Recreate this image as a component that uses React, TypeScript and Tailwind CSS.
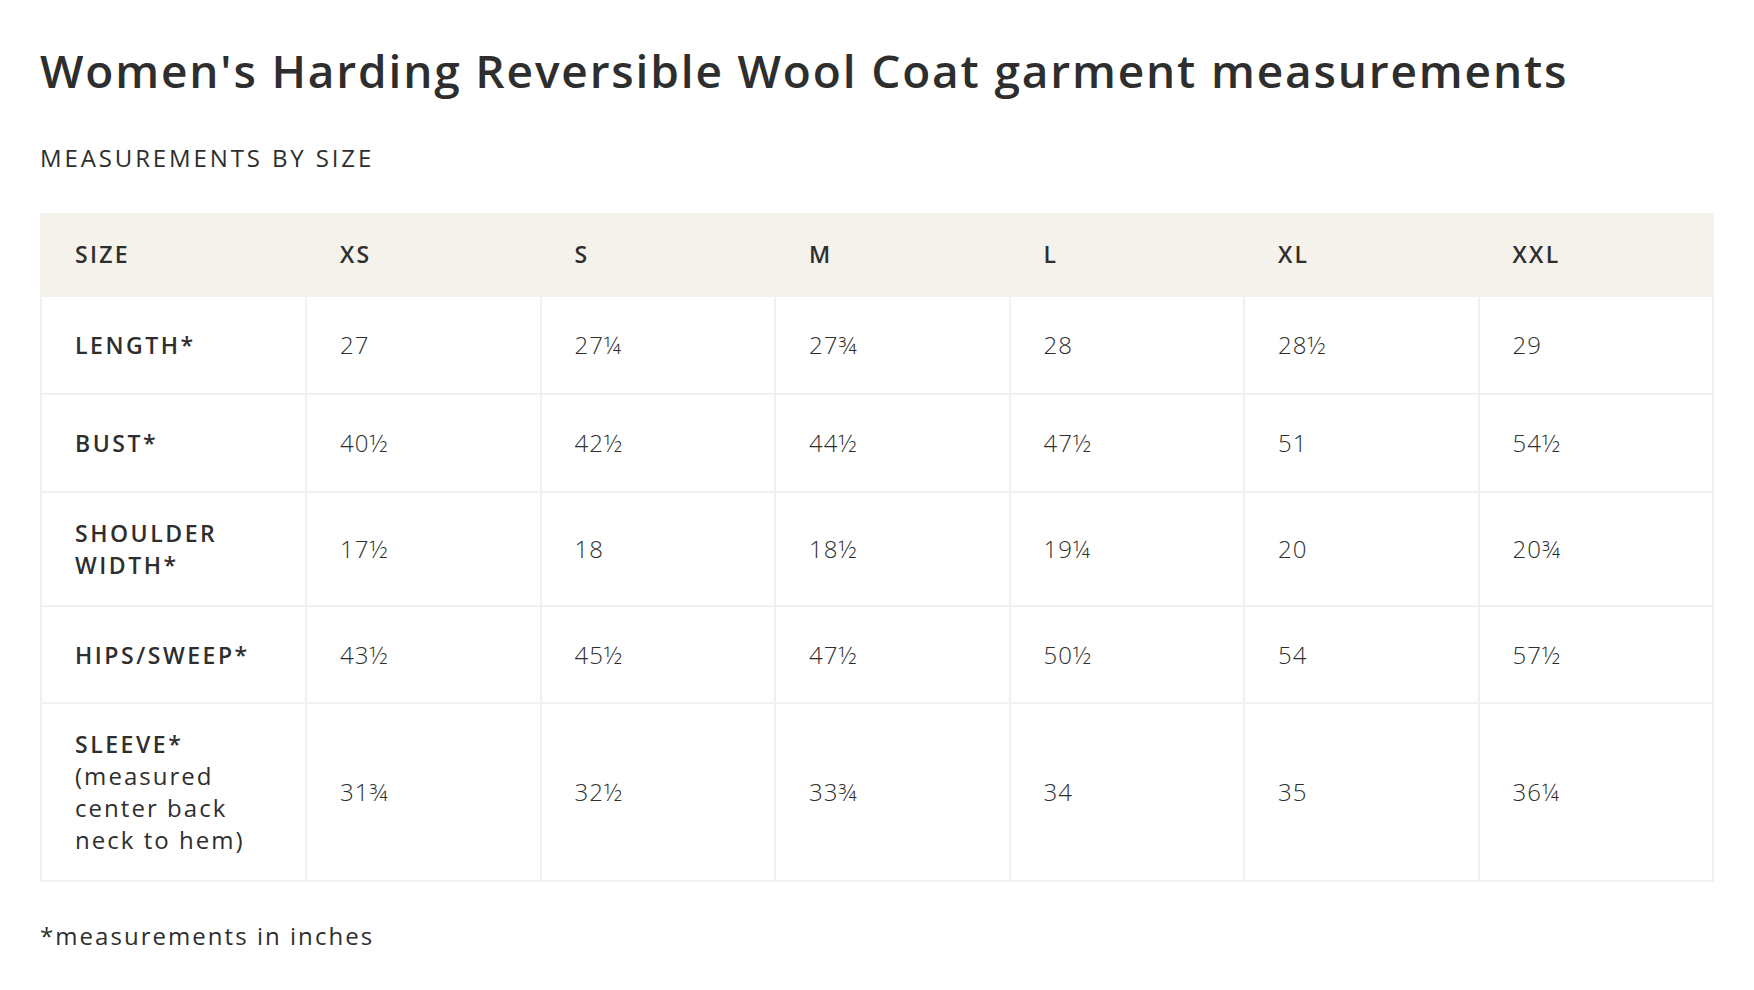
import React from "react";

const sizes = ["XS", "S", "M", "L", "XL", "XXL"];

type Row = { label: React.ReactNode; values: string[]; h: string };

const rows: Row[] = [
  { label: "LENGTH*", values: ["27", "27¼", "27¾", "28", "28½", "29"], h: "h-[98px]" },
  { label: "BUST*", values: ["40½", "42½", "44½", "47½", "51", "54½"], h: "h-[98px]" },
  {
    label: (
      <>
        SHOULDER
        <br />
        WIDTH*
      </>
    ),
    values: ["17½", "18", "18½", "19¼", "20", "20¾"],
    h: "h-[114px]",
  },
  { label: "HIPS/SWEEP*", values: ["43½", "45½", "47½", "50½", "54", "57½"], h: "h-[97px]" },
  {
    label: (
      <>
        <span>SLEEVE*</span>
        <br />
        <span className="text-[24px] font-normal tracking-[0.085em]">
          (measured
          <br />
          center back
          <br />
          neck to hem)
        </span>
      </>
    ),
    values: ["31¾", "32½", "33¾", "34", "35", "36¼"],
    h: "h-[177px]",
  },
];

export default function App() {
  return (
    <div
      className="min-h-screen bg-white px-[40px] pt-[42px] text-[#2e2e2e]"
      style={{ fontFamily: '"Open Sans", "Noto Sans", sans-serif' }}
    >
      <h1 className="text-[46px] font-semibold leading-[56px] tracking-[0.04em]">
        Women's Harding Reversible Wool Coat garment measurements
      </h1>
      <h2 className="mt-[44px] text-[24px] font-medium leading-[32px] tracking-[0.12em]">
        MEASUREMENTS BY SIZE
      </h2>
      <table className="mt-[39px] w-full table-fixed border-collapse text-[24px] leading-[32px]">
        <colgroup>
          <col className="w-[265px]" />
          <col />
          <col />
          <col />
          <col />
          <col />
          <col />
        </colgroup>
        <thead>
          <tr className="h-[83px] bg-[#f5f2ec]">
            <th className="border-x-2 border-[#f5f2ec] pl-[33px] text-left text-[23px] font-semibold tracking-[0.1em]">
              SIZE
            </th>
            {sizes.map((s) => (
              <th
                key={s}
                className="border-x-2 border-[#f5f2ec] pl-[33px] text-left text-[23px] font-semibold tracking-[0.1em]"
              >
                {s}
              </th>
            ))}
          </tr>
        </thead>
        <tbody>
          {rows.map((r, i) => (
            <tr key={i} className={r.h}>
              <td className="border-2 border-[#f1f1f1] py-[24px] pl-[33px] pr-2 align-middle text-[23px] font-semibold tracking-[0.11em]">
                {r.label}
              </td>
              {r.values.map((v, j) => (
                <td
                  key={j}
                  className="border-2 border-[#f1f1f1] pl-[33px] align-middle font-light tracking-[0.04em]"
                >
                  {v}
                </td>
              ))}
            </tr>
          ))}
        </tbody>
      </table>
      <p className="mt-[38px] text-[24px] font-normal leading-[32px] tracking-[0.085em]">
        *measurements in inches
      </p>
    </div>
  );
}
